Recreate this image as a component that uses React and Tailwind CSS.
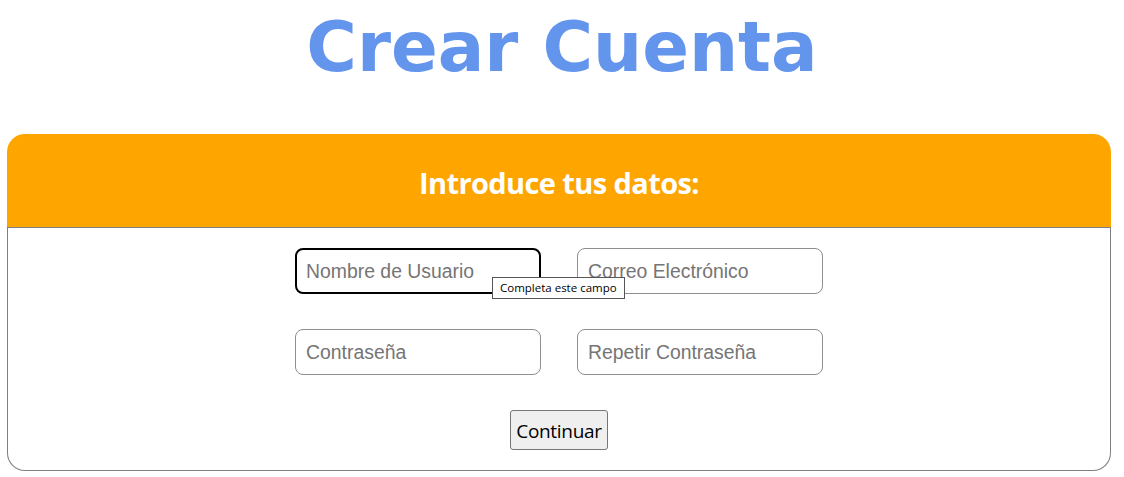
export default function App() {
  const inputCls =
    "w-[246px] h-[46px] rounded-[8px] border border-[#8f8f8f] bg-white px-[10px] text-[19.4px] text-black placeholder:text-[#757575] outline-none";
  return (
    <div className="w-[1124px] h-[477px] bg-white overflow-hidden">
      <h1
        className="text-center text-[69px] leading-none font-bold text-[#6495ED] pt-[13px] h-[134px]"
        style={{ fontFamily: '"DejaVu Sans", Verdana, sans-serif' }}
      >
        Crear Cuenta
      </h1>
      <div className="ml-[7px] w-[1104px]">
        <div className="h-[94px] bg-[#FFA500] rounded-t-[18px] border-b border-[#808080] flex items-center justify-center">
          <h2
            className="text-white font-bold text-[29px] pt-[4px]"
            style={{ fontFamily: '"Open Sans", sans-serif', letterSpacing: "-0.6px" }}
          >
            Introduce tus datos:
          </h2>
        </div>
        <div className="h-[243px] border-x border-b border-[#808080] rounded-b-[18px] flex flex-col items-center pt-[20px]">
          <div
            className="grid grid-cols-[246px_246px] gap-x-[36px] gap-y-[35px]"
            style={{ fontFamily: '"Liberation Sans", Arial, sans-serif' }}
          >
            <div className="relative">
              <input
                className="w-[246px] h-[46px] rounded-[8px] border-2 border-black bg-white px-[9px] text-[19.4px] text-black placeholder:text-[#757575] outline-none"
                placeholder="Nombre de Usuario"
              />
              <div
                className="absolute left-[197px] top-[29px] h-[22px] px-[7px] flex items-center bg-white border border-[#555] text-[11.5px] text-black whitespace-nowrap z-10"
                style={{ fontFamily: '"Open Sans", sans-serif' }}
              >
                Completa este campo
              </div>
            </div>
            <input className={inputCls} placeholder="Correo Electrónico" />
            <input className={inputCls} placeholder="Contraseña" />
            <input className={inputCls} placeholder="Repetir Contraseña" />
          </div>
          <button
            className="mt-[35px] w-[98px] h-[40px] bg-[#efefef] border border-[#767676] rounded-[3px] text-[19px] text-black pt-[2px]"
            style={{ fontFamily: '"Open Sans", sans-serif', letterSpacing: "-0.3px" }}
          >
            Continuar
          </button>
        </div>
      </div>
    </div>
  );
}
